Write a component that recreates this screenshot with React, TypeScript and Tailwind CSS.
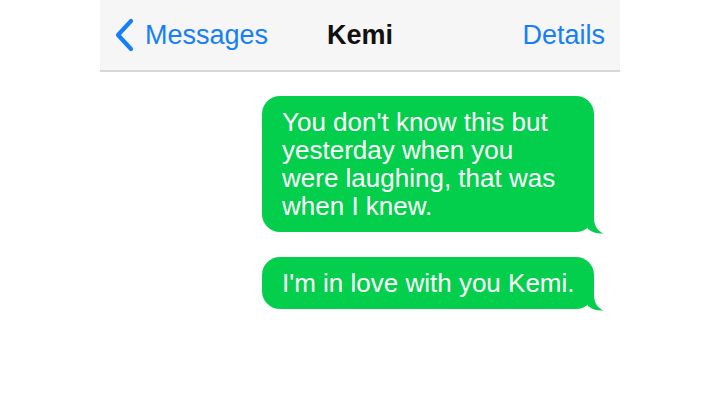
import React from "react";

function Tail() {
  return (
    <svg
      className="absolute right-[-11px] bottom-[-3px]"
      width="25"
      height="25"
      viewBox="0 0 25 25"
    >
      <path
        d="M14 2 L14 10 C15 17 18 21 23.5 23.5 C18 24 12 22.5 8 19 L5 10 Z"
        fill="#03cf4c"
      />
    </svg>
  );
}

function Bubble({ children, pad }: { children: React.ReactNode; pad: string }) {
  return (
    <div
      className={`relative w-[332px] rounded-[18px] bg-[#03cf4c] pl-5 py-3 text-[26px] leading-[28px] text-white ${pad}`}
    >
      {children}
      <Tail />
    </div>
  );
}

export default function App() {
  return (
    <div
      className="flex h-[405px] w-[720px] justify-center bg-white"
      style={{ fontFamily: '"Liberation Sans", Arial, sans-serif' }}
    >
      <div className="flex w-[520px] flex-col">
        <div className="relative flex h-[72px] items-center border-b-2 border-[#d6d6d6] bg-[#f6f6f6] px-[15px]">
          <div className="flex items-center text-[27px] text-[#157efb]">
            <svg width="20" height="34" viewBox="0 0 20 34" className="mr-[10px]">
              <path
                d="M16 3 L3 17 L16 31"
                fill="none"
                stroke="#157efb"
                strokeWidth="4.2"
                strokeLinecap="round"
                strokeLinejoin="round"
              />
            </svg>
            <span>Messages</span>
          </div>
          <div className="absolute left-0 right-0 text-center text-[27px] font-bold text-[#111]">
            Kemi
          </div>
          <div className="ml-auto text-[27px] text-[#157efb]">Details</div>
        </div>
        <div className="flex flex-col items-end gap-[25px] pt-6 pr-[26px]">
          <Bubble pad="pr-[28px]">
            You don't know this but yesterday when you were laughing, that was
            when I knew.
          </Bubble>
          <Bubble pad="pr-3">I'm in love with you Kemi.</Bubble>
        </div>
      </div>
    </div>
  );
}
